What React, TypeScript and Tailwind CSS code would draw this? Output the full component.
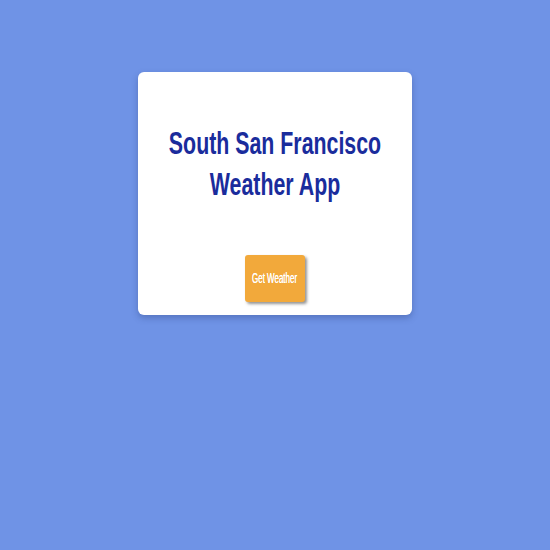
import React from "react";

export default function App() {
  return (
    <div
      className="min-h-[550px] w-full bg-[#6f93e6] pt-[72px]"
      style={{ fontFamily: '"Liberation Sans", Arial, sans-serif' }}
    >
      <div className="mx-auto flex w-[274px] flex-col items-center rounded-md bg-white pb-[13px] pt-[51px] shadow-[0_3px_6px_rgba(40,60,120,0.35)]">
        <h1 className="w-[420px] scale-x-[0.667] text-center text-[32px] font-bold leading-[41px] text-[#1a2c9c]">
          South San Francisco
          <br />
          Weather App
        </h1>

        <button
          type="button"
          className="mt-[50px] flex h-[47px] w-[60px] items-center justify-center rounded-[3px] bg-[#f2a93b] shadow-[2px_2px_3px_rgba(60,60,60,0.55)]"
        >
          <span className="inline-block scale-x-[0.57] whitespace-nowrap text-[14px] text-white [text-shadow:0_0_0.4px_white]">
            Get Weather
          </span>
        </button>
      </div>
    </div>
  );
}
